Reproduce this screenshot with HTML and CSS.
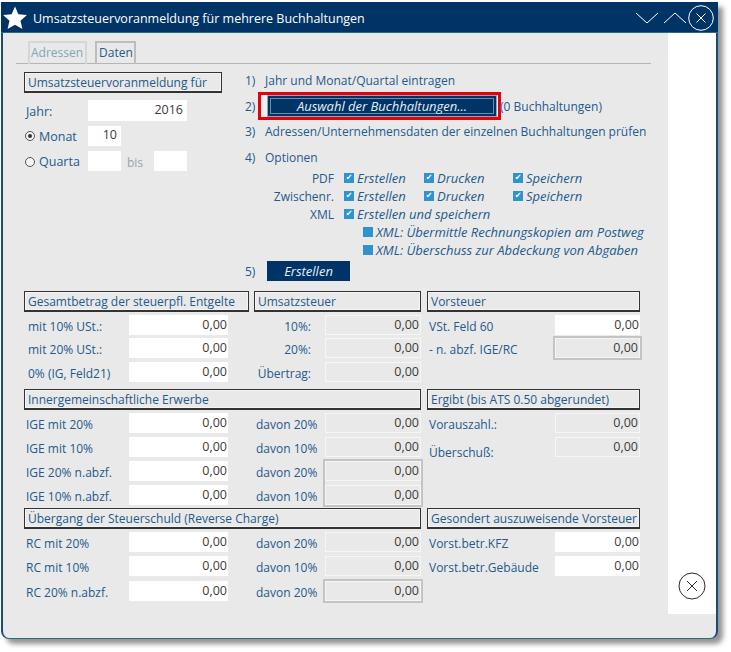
FILE: index.html
```html
<!DOCTYPE html>
<html lang="de">
<head>
<meta charset="utf-8">
<title>Umsatzsteuervoranmeldung</title>
<link rel="stylesheet" href="styles.css">
</head>
<body>
<div class="window">
  <header class="titlebar">
    <svg class="star" viewBox="0 0 24 24" width="24" height="24"><path d="M12 0.5l3.4 7.8 8.5.8-6.4 5.6 1.9 8.3L12 18.7l-7.4 4.3 1.9-8.3L.1 9.1l8.5-.8z" fill="#fff"/></svg>
    <h1 class="title">Umsatzsteuervoranmeldung für mehrere Buchhaltungen</h1>
    <svg class="winicon" viewBox="0 0 24 12" width="24" height="12"><path d="M1 1l11 10L23 1" fill="none" stroke="#fff" stroke-width="1"/></svg>
    <svg class="winicon up" viewBox="0 0 24 12" width="24" height="12"><path d="M1 11L12 1l11 10" fill="none" stroke="#fff" stroke-width="1"/></svg>
    <svg class="winclose" viewBox="0 0 26 26" width="26" height="26"><circle cx="13" cy="13" r="12.3" fill="none" stroke="#fff"/><path d="M8.5 8.5l9 9M17.5 8.5l-9 9" stroke="#fff" fill="none"/></svg>
  </header>
  <div class="content">
    <main class="panel">
      <nav class="tabs">
        <span class="tab off">Adressen</span>
        <span class="tab on">Daten</span>
      </nav>
      <section class="upper">
        <div class="period">
          <div class="head period-head">Umsatzsteuervoranmeldung für</div>
          <div class="prow year"><span class="plabel">Jahr:</span><input class="fld w99" value="2016"></div>
          <div class="prow month"><label class="plabel radio"><i class="dot sel"></i>Monat</label><input class="fld w33" value="10"></div>
          <div class="prow quarter"><label class="plabel radio"><i class="dot"></i>Quarta</label><input class="fld w33" value=""><span class="bis">bis</span><input class="fld w33" value=""></div>
        </div>
        <div class="steps">
          <div class="step s1"><span class="num">1)</span>Jahr und Monat/Quartal eintragen</div>
          <div class="step s2"><span class="num">2)</span><span class="mark"><button class="btn wide">Auswahl der Buchhaltungen...</button></span><span class="count">(0 Buchhaltungen)</span></div>
          <div class="step s3"><span class="num">3)</span>Adressen/Unternehmensdaten der einzelnen Buchhaltungen prüfen</div>
          <div class="step s4"><span class="num">4)</span>Optionen</div>
          <div class="opts">
            <div class="opt"><span class="optname">PDF</span><span class="chk c1"><i class="box">✔</i>Erstellen</span><span class="chk c2"><i class="box">✔</i>Drucken</span><span class="chk c3"><i class="box">✔</i>Speichern</span></div>
            <div class="opt"><span class="optname">Zwischenr.</span><span class="chk c1"><i class="box">✔</i>Erstellen</span><span class="chk c2"><i class="box">✔</i>Drucken</span><span class="chk c3"><i class="box">✔</i>Speichern</span></div>
            <div class="opt"><span class="optname">XML</span><span class="chk c1"><i class="box">✔</i>Erstellen und speichern</span></div>
            <div class="opt sub"><span class="chk"><i class="box"></i>XML: Übermittle Rechnungskopien am Postweg</span></div>
            <div class="opt sub"><span class="chk"><i class="box"></i>XML: Überschuss zur Abdeckung von Abgaben</span></div>
          </div>
          <div class="step s5"><span class="num">5)</span><button class="btn make">Erstellen</button></div>
        </div>
      </section>
      <section class="lower">
        <div class="head h1">Gesamtbetrag der steuerpfl. Entgelte</div>
        <div class="head h2">Umsatzsteuer</div>
        <div class="head">Vorsteuer</div>

        <div class="row a"><span>mit 10% USt.:</span><input class="fld" value="0,00"></div>
        <div class="row b"><span>10%:</span><input class="fld ro" value="0,00" readonly></div>
        <div class="row c"><span>VSt. Feld 60</span><input class="fld" value="0,00"></div>

        <div class="row a"><span>mit 20% USt.:</span><input class="fld" value="0,00"></div>
        <div class="row b"><span>20%:</span><input class="fld ro" value="0,00" readonly></div>
        <div class="row c"><span>- n. abzf. IGE/RC</span><input class="fld ro framed" value="0,00" readonly></div>

        <div class="row a"><span>0% (IG, Feld21)</span><input class="fld" value="0,00"></div>
        <div class="row b"><span>Übertrag:</span><input class="fld ro" value="0,00" readonly></div>
        <div class="row c"></div>

        <div class="head span2">Innergemeinschaftliche Erwerbe</div>
        <div class="head">Ergibt (bis ATS 0.50 abgerundet)</div>

        <div class="row d"><span>IGE mit 20%</span><input class="fld" value="0,00"></div>
        <div class="row e"><span>davon 20%</span><input class="fld ro" value="0,00" readonly></div>
        <div class="row c"><span>Vorauszahl.:</span><input class="fld ro" value="0,00" readonly></div>

        <div class="row d"><span>IGE mit 10%</span><input class="fld" value="0,00"></div>
        <div class="row e"><span>davon 10%</span><input class="fld ro" value="0,00" readonly></div>
        <div class="row c drop"><span>Überschuß:</span><input class="fld ro" value="0,00" readonly></div>

        <div class="row d"><span>IGE 20% n.abzf.</span><input class="fld" value="0,00"></div>
        <div class="pair">
          <div class="pair-labels"><span>davon 20%</span><span>davon 10%</span></div>
          <div class="stack"><input class="fld ro" value="0,00" readonly><input class="fld ro" value="0,00" readonly></div>
        </div>
        <div class="row c"></div>

        <div class="row d"><span>IGE 10% n.abzf.</span><input class="fld" value="0,00"></div>
        <div class="row c col3"></div>

        <div class="head span2">Übergang der Steuerschuld (Reverse Charge)</div>
        <div class="head">Gesondert auszuweisende Vorsteuer</div>

        <div class="row d"><span>RC mit 20%</span><input class="fld" value="0,00"></div>
        <div class="row e"><span>davon 20%</span><input class="fld ro" value="0,00" readonly></div>
        <div class="row c"><span>Vorst.betr.KFZ</span><input class="fld" value="0,00"></div>

        <div class="row d"><span>RC mit 10%</span><input class="fld" value="0,00"></div>
        <div class="row e"><span>davon 10%</span><input class="fld ro" value="0,00" readonly></div>
        <div class="row c"><span>Vorst.betr.Gebäude</span><input class="fld" value="0,00"></div>

        <div class="row d"><span>RC 20% n.abzf.</span><input class="fld" value="0,00"></div>
        <div class="row e"><span>davon 20%</span><input class="fld ro framed" value="0,00" readonly></div>
      </section>
    </main>
    <aside class="side">
      <svg viewBox="0 0 28 28" width="28" height="28"><circle cx="14" cy="14" r="13" fill="none" stroke="#2b2b2b" stroke-width="1"/><path d="M9 9l10 10M19 9L9 19" stroke="#2b2b2b" fill="none"/></svg>
    </aside>
  </div>
</div>
</body>
</html>
```

FILE: styles.css
```css
* { box-sizing: border-box; }
html, body { margin: 0; padding: 0; background: #fff; }
body { width: 731px; height: 652px; overflow: hidden; font-family: "Open Sans", sans-serif; font-size: 12px; color: #24598c; }

.window { margin: 2px 0 0 1px; width: 717px; height: 637px; background: #e9e9e9; border: 1px solid #1b4a78; border-top: 0; border-left-width: 2px; border-right-width: 2px; border-bottom-color: #2c6b7c; border-bottom-left-radius: 8px; border-bottom-right-radius: 8px; box-shadow: 5px 5px 5px rgba(90, 90, 90, .65); display: flex; flex-direction: column; }

.titlebar { height: 31px; margin: 0 -2px; background: #003466; display: flex; align-items: center; padding: 0 4px 0 2px; flex: none; border-bottom: 1px solid #2a6a78; }
.star { margin-right: 6px; margin-top: 1px; }
.title { margin: 0; flex: 1; font: 400 12.5px "Open Sans", sans-serif; color: #fff; padding-top: 3px; }
.winicon { margin-top: 2px; margin-right: 4px; }
.winicon.up { margin-right: 1px; }
.winclose { margin-top: 1px; }

.content { flex: 1; display: flex; min-height: 0; }
.panel { width: 666px; padding: 8px 0 0 13px; }
.side { width: 48px; height: 581px; background: #fff; display: flex; align-items: flex-end; justify-content: center; padding-bottom: 14px; }

.tabs { width: 635px; height: 23px; border-bottom: 1px solid #b5b5b5; padding-left: 12px; display: flex; gap: 8px; }
.tab { height: 23px; border: 2px solid #d4d4d4; border-bottom: 0; padding: 1px 1px 0; line-height: 18px; }
.tab.off { width: 59px; color: #7fa6b8; border-color: #d6d6d6; }
.tab.on { width: 41px; border-color: #bdbdbd; color: #24598c; padding-left: 2px; }

.upper { display: flex; height: 227px; padding-left: 8px; }
.period { width: 221px; padding-top: 8px; }
.head { height: 21px; border: 1px solid #333; border-bottom-width: 2px; box-shadow: inset 0 0 0 1px #f4f4f4; padding: 0 0 0 3px; line-height: 19px; white-space: nowrap; overflow: hidden; }
.period-head { width: 198px; }
.prow { display: flex; align-items: center; height: 21px; }
.year { margin-top: 7px; }
.month { margin-top: 4px; }
.quarter { margin-top: 4px; }
.plabel { width: 64px; padding-left: 2px; display: flex; align-items: center; padding-top: 1px; font-size: 12.5px; }
.quarter .plabel { padding-top: 2px; }
.radio { padding-left: 1px; }
.dot { width: 10px; height: 10px; border: 1px solid #555; border-radius: 50%; background: #f4f4f4; margin-right: 4px; position: relative; flex: none; }
.dot.sel::after { content: ""; width: 4px; height: 4px; background: #333; border-radius: 50%; position: absolute; left: 2px; top: 2px; }
.bis { width: 33px; padding: 4px 0 0 6px; color: #9aa4ac; }

.fld { display: block; height: 20px; width: 99px; border: 0; background: #fff; margin: 0; padding: 0 1px 2px 0; text-align: right; font: 400 12.5px "Open Sans", sans-serif; color: #3b3b3b; outline: 0; flex: none; }
.w99 { width: 99px; height: 21px; padding-right: 4px; }
.w33 { width: 33px; padding-right: 4px; }
.ro { background: #e9e9e9; border: 1px solid #f6f6f6; width: 96px; padding-bottom: 2px; }
.framed { outline: 2px solid #c4c4c4; }

.steps { flex: 1; padding-top: 6px; }
.step { display: flex; align-items: center; height: 20px; white-space: nowrap; }
.num { width: 20px; flex: none; }
.s2 { margin-top: 2px; height: 28px; }
.s3 { margin-top: 1px; }
.s4 { margin-top: 6px; }
.mark { width: 243px; height: 28px; margin-left: -7px; border: 3px solid #e5000a; display: flex; align-items: center; padding-left: 7px; background: #f0f0f0; flex: none; }
.btn { border: 0; background: #003466; color: #e4eef5; font: italic 400 13px "Open Sans", sans-serif; padding: 0 0 1px; }
.wide { width: 228px; height: 20px; box-shadow: 0 0 0 1px #8ea6bd, inset 0 0 0 2px #003466, inset 0 0 0 3px #6f8cab; }
.count { margin-left: -1px; }
.make { width: 83px; height: 20px; margin-left: 2px; }
.s5 { margin-top: 2px; }

.opts { margin-top: 2px; }
.opt { display: flex; height: 18px; align-items: center; white-space: nowrap; }
.optname { width: 89px; text-align: right; flex: none; }
.chk { display: flex; align-items: center; font-style: italic; font-size: 13px; flex: none; }
.c1 { margin-left: 10px; width: 80px; }
.c2 { width: 89px; }
.box { width: 10px; height: 10px; background: #2e93cf; margin-right: 3px; flex: none; color: #fff; font: normal 8px/10px "DejaVu Sans", sans-serif; text-align: center; }
.sub { padding-left: 118px; }

.lower { display: grid; grid-template-columns: 230px 173px 213px; grid-template-rows: 24px 23px 24px 27px 24px 24px 24px 24px 23px 24px 24px 25px 20px; margin-left: 8px; width: 616px; }
.h1 { margin-right: 5px; }
.h2 { margin-right: 6px; }
.span2 { grid-column: span 2; margin-right: 6px; }
.lower .head { align-self: start; }
.row { display: flex; justify-content: space-between; align-items: flex-start; }
.row > span { padding-top: 3px; white-space: nowrap; }
.a { padding-left: 4px; padding-right: 2px; width: 206px; }
.d { padding-left: 2px; padding-right: 2px; width: 206px; }
.b, .e { padding-right: 6px; }
.b > span { width: 57px; text-align: right; }
.e { padding-left: 2px; }
.c { padding-left: 2px; }
.c .fld { width: 85px; }
.drop > span { padding-top: 7px; }
.col3 { grid-column: 3; }

.pair { grid-row: span 2; display: flex; justify-content: space-between; padding: 0 6px 0 2px; }
.pair-labels { display: flex; flex-direction: column; gap: 7px; padding-top: 3px; }
.stack { width: 96px; height: 44px; display: flex; flex-direction: column; gap: 4px; outline: 2px solid #c4c4c4; }
```
